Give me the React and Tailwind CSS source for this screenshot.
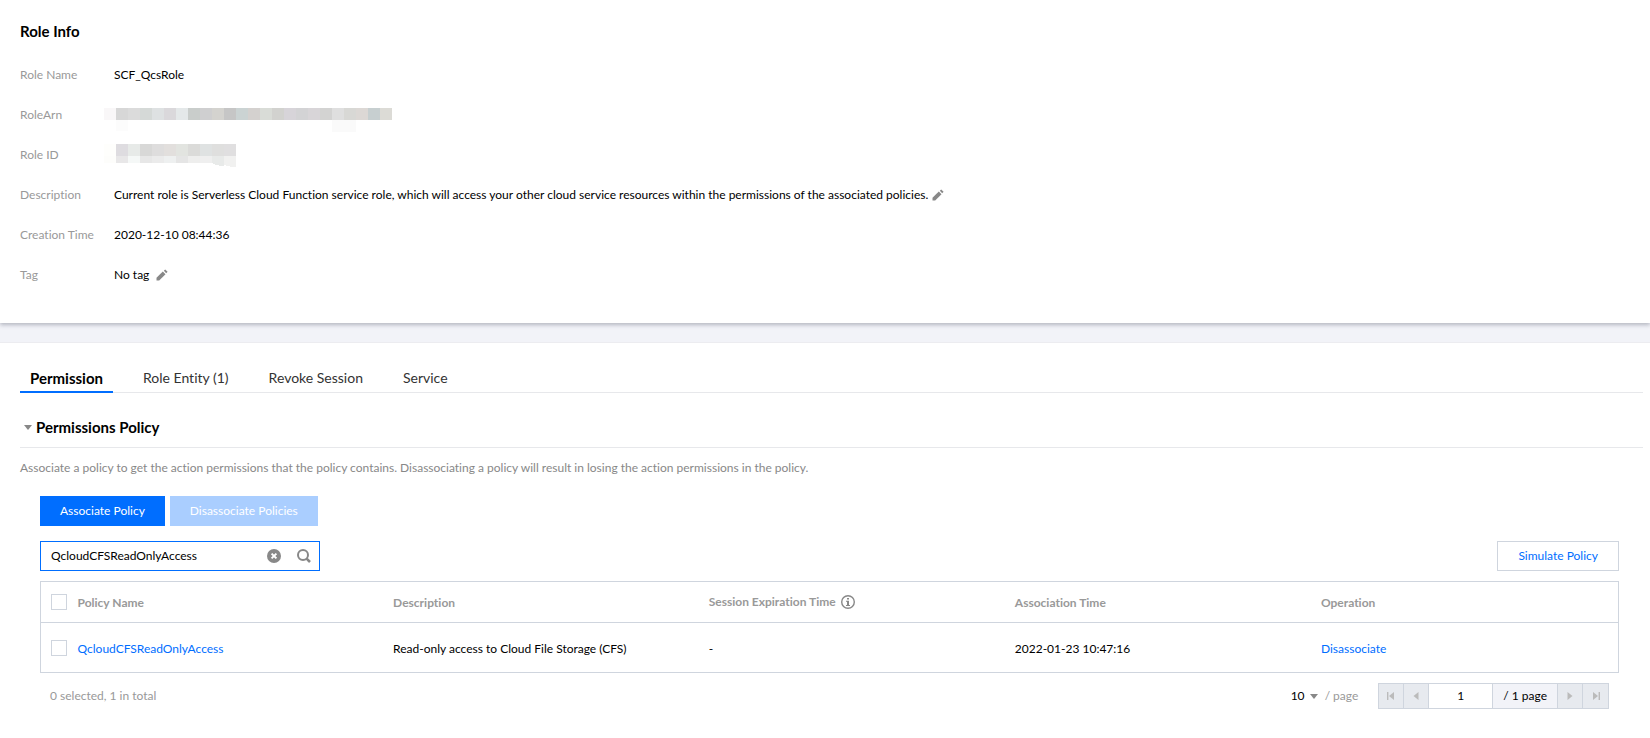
import { useState } from "react";

const LINE_CELLS = [
  "#f9f7f8", "#d7d7d7", "#dbdbdb", "#d5d9d7", "#dee1e2", "#dad8db", "#e4e8e9", "#c9cdcb",
  "#cfcfd0", "#d4d3cf", "#c6c6c6", "#cbd3d3", "#d4d1cf", "#d9dcd7", "#d2d2cf", "#d7d4d9",
  "#d3d3d5", "#d8d5d8", "#d3d3d2", "#dfdfdf", "#d8d8d5", "#dcd8d5", "#c7cfd0", "#dcdbd6",
];
const ID_CELLS = [
  "#fefefc", "#dedce0", "#e7eae8", "#d8d8d7", "#dedddd", "#e2dfdd", "#e2e4e0", "#dbdbd9",
  "#dfe2e2", "#dfdfde", "#e0dfe0",
];
const ID_CELLS_LOWER = [
  "#fdfdfb", "#e8e7e8", "#f5f8f7", "#e7e7e7", "#ebebeb", "#eef0f0", "#e5e5e5", "#eeeeed",
  "#efefef", "#e8eae9", "#f1f1f0",
];

function RedactedArn() {
  return (
    <svg className="-ml-2.5 block overflow-visible" width="290" height="14" role="img" aria-label="Hidden RoleArn" shapeRendering="crispEdges">
      {LINE_CELLS.map((c, i) => (
        <rect key={i} x={i * 12} y="0" width="12" height="12" fill={c} />
      ))}
      <rect x="12" y="12" width="12" height="11" fill="#fcfcfc" />
      <rect x="228" y="12" width="24" height="12" fill="#fafafa" />
    </svg>
  );
}

function RedactedId() {
  return (
    <svg className="-ml-2.5 block overflow-visible" width="146" height="22" role="img" aria-label="Hidden Role ID" shapeRendering="crispEdges">
      {ID_CELLS.map((c, i) => (
        <rect key={i} x={i * 12} y="0" width="12" height="12" fill={c} />
      ))}
      {ID_CELLS_LOWER.map((c, i) => (
        <rect key={i} x={i * 12} y="12" width="12" height="7" fill={c} />
      ))}
      <path d="M108 19h12v3q-7 0-12-3z" fill="#e8eae9" />
      <path d="M120 19h12v4q-6 0-12-2z" fill="#f1f1f0" />
    </svg>
  );
}

function PencilIcon() {
  return (
    <svg className="block" width="12" height="12" viewBox="0 0 12 12" fill="#888" aria-hidden="true">
      <path d="M0.5 11.5V8.8L6.8 2.6 9.5 5.2 3.2 11.5z" />
      <path d="M7.8 1.8 9.2 0.4 11.6 2.8 10.2 4.2z" />
    </svg>
  );
}

function ClearIcon() {
  return (
    <svg className="block" width="14" height="14" viewBox="0 0 14 14" aria-hidden="true">
      <circle cx="7" cy="7" r="7" fill="#888" />
      <path d="M4.6 4.6l4.8 4.8M9.4 4.6l-4.8 4.8" stroke="#fff" strokeWidth="2" />
    </svg>
  );
}

function SearchIcon() {
  return (
    <svg className="block" width="14" height="14" viewBox="0 0 14 14" fill="none" stroke="#888" strokeWidth="2" aria-hidden="true">
      <circle cx="6" cy="6" r="5" />
      <path d="M9.6 9.6 13 13" strokeWidth="2.6" />
    </svg>
  );
}

function InfoIcon() {
  return (
    <svg className="block" width="14" height="14" viewBox="0 0 14 14" aria-hidden="true">
      <circle cx="7" cy="7" r="6.3" fill="none" stroke="#888" strokeWidth="1.4" />
      <path d="M6 3h2v1.6H6zM5 5.8h3V10h1v1H5v-1h1V6.8H5z" fill="#888" />
    </svg>
  );
}

function InfoRow({ label, children }) {
  return (
    <div className="flex h-10 items-center">
      <dt className="w-[94px] shrink-0 text-[#999]">{label}</dt>
      <dd className="flex items-center">{children}</dd>
    </div>
  );
}

function CheckBox({ label }) {
  return (
    <input
      type="checkbox"
      aria-label={label}
      className="block size-4 appearance-none border border-[#cfd5de] bg-white checked:bg-[#006eff]"
    />
  );
}

function PageButton({ label, path }) {
  return (
    <button type="button" disabled aria-label={label} className="flex w-[25px] items-center justify-center border-r border-[#cfd5de] bg-[#e7eaef] last:border-r-0">
      <svg width="8" height="8" viewBox="0 0 8 8" fill="#bbb" aria-hidden="true">
        <path d={path} />
      </svg>
    </button>
  );
}

const TABS = ["Permission", "Role Entity (1)", "Revoke Session", "Service"];

export default function App() {
  const [tab, setTab] = useState(0);
  const [query, setQuery] = useState("QcloudCFSReadOnlyAccess");
  return (
    <div className="min-h-screen bg-white font-['Lato',sans-serif] text-[12px] leading-5 text-black [font-variant-ligatures:none]">
      <section className="relative bg-white px-5 pt-5 pb-7 shadow-[0_2px_4px_rgba(54,58,80,0.32)]">
        <h2 className="pt-[1px] pb-[14px] text-[15px] leading-5 font-bold">Role Info</h2>
        <dl>
          <InfoRow label="Role Name">SCF_QcsRole</InfoRow>
          <InfoRow label="RoleArn"><RedactedArn /></InfoRow>
          <InfoRow label="Role ID"><RedactedId /></InfoRow>
          <InfoRow label="Description">
            Current role is Serverless Cloud Function service role, which will access your other cloud service resources within the permissions of the associated policies.
            <button type="button" aria-label="Edit description" className="ml-1"><PencilIcon /></button>
          </InfoRow>
          <InfoRow label="Creation Time">2020-12-10 08:44:36</InfoRow>
          <InfoRow label="Tag">
            No tag
            <button type="button" aria-label="Edit tag" className="ml-[7px]"><PencilIcon /></button>
          </InfoRow>
        </dl>
      </section>
      <div className="h-5 border-b border-[#ececf0] bg-[#f2f3f8]" />
      <section className="pt-5 pr-[7px] pl-5">
        <div role="tablist" className="flex gap-5 border-b border-[#e7e8eb]">
          {TABS.map((t, i) => (
            <button
              key={t}
              type="button"
              role="tab"
              aria-selected={tab === i}
              onClick={() => setTab(i)}
              className={tab === i
                ? "-mb-px border-b-2 border-[#006eff] px-2.5 pt-[5px] pb-[3px] text-[15px] leading-5 font-bold"
                : "px-2.5 pt-[5px] pb-1 text-[14px] leading-5 text-[#333]"}
            >
              {t}
            </button>
          ))}
        </div>
        <h3 className="mt-6 flex items-center gap-1 border-b border-[#e7e8eb] pb-[10px] pl-1 text-[15px] leading-5 font-bold">
          <svg width="8" height="5" viewBox="0 0 8 5" fill="#888" aria-hidden="true"><path d="M0 0h8L4 5z" /></svg>
          Permissions Policy
        </h3>
        <p className="mt-[10px] text-[#888]">
          Associate a policy to get the action permissions that the policy contains. Disassociating a policy will result in losing the action permissions in the policy.
        </p>
        <div className="mt-[18px] mr-6 ml-5">
          <div className="flex gap-[5px]">
            <button type="button" className="h-[30px] bg-[#006eff] px-5 text-white">Associate Policy</button>
            <button type="button" disabled className="h-[30px] bg-[#aaceff] px-5 text-white">Disassociate Policies</button>
          </div>
          <div className="mt-[15px] flex justify-between">
            <div className="flex h-[30px] w-[280px] items-center border border-[#006eff] pr-2 pl-2.5">
              <input aria-label="Search policies" value={query} onChange={(e) => setQuery(e.target.value)} className="min-w-0 flex-1 outline-none" />
              <button type="button" aria-label="Clear" onClick={() => setQuery("")}><ClearIcon /></button>
              <button type="button" aria-label="Search" className="ml-4"><SearchIcon /></button>
            </div>
            <button type="button" className="h-[30px] border border-[#cfd5de] px-5 text-[#006eff]">Simulate Policy</button>
          </div>
          <table className="mt-2.5 w-full table-fixed border-collapse border border-[#cfd5de] text-left">
            <colgroup>
              <col className="w-[27px]" />
              <col className="w-[20%]" />
              <col className="w-[20%]" />
              <col className="w-[19.4%]" />
              <col className="w-[19.4%]" />
              <col />
            </colgroup>
            <thead className="text-[#999]">
              <tr className="h-[41px] border-b border-[#cfd5de]">
                <th className="pl-2.5"><CheckBox label="Select all" /></th>
                <th className="px-2.5 pt-0.5 font-bold">Policy Name</th>
                <th className="px-2.5 pt-0.5 font-bold">Description</th>
                <th className="px-2.5 font-bold">
                  <span className="flex items-center gap-[5px]">Session Expiration Time <InfoIcon /></span>
                </th>
                <th className="px-2.5 pt-0.5 font-bold">Association Time</th>
                <th className="px-2.5 pt-0.5 font-bold">Operation</th>
              </tr>
            </thead>
            <tbody>
              <tr className="h-[50px]">
                <td className="pl-2.5"><CheckBox label="Select QcloudCFSReadOnlyAccess" /></td>
                <td className="px-2.5 pt-0.5"><a href="#policy" className="text-[#006eff]">QcloudCFSReadOnlyAccess</a></td>
                <td className="px-2.5 pt-0.5">Read-only access to Cloud File Storage (CFS)</td>
                <td className="px-2.5 pt-0.5">-</td>
                <td className="px-2.5 pt-0.5">2022-01-23 10:47:16</td>
                <td className="px-2.5 pt-0.5"><a href="#disassociate" className="text-[#006eff]">Disassociate</a></td>
              </tr>
            </tbody>
          </table>
          <div className="flex items-center px-2.5 pt-2.5">
            <span className="text-[#999]">0 selected, 1 in total</span>
            <label className="ml-auto flex items-center text-[#999]">
              <span className="relative flex items-center">
                <select aria-label="Items per page" className="w-[34px] appearance-none text-black">
                  <option>10</option>
                  <option>20</option>
                </select>
                <svg className="pointer-events-none absolute right-[7px]" width="8" height="5" viewBox="0 0 8 5" fill="#888" aria-hidden="true"><path d="M0 0h8L4 5z" /></svg>
              </span>
              / page
            </label>
            <div className="ml-5 flex h-[26px] border border-[#cfd5de]">
              <PageButton label="First page" path="M0 0h1.4v8H0zM7 0v8L2 4z" />
              <PageButton label="Previous page" path="M6.5 0v8L1.5 4z" />
              <input aria-label="Page number" defaultValue="1" className="w-[63px] text-center outline-none" />
              <span className="flex items-center border-x border-[#cfd5de] bg-[#f2f3f8] px-2.5">/ 1 page</span>
              <PageButton label="Next page" path="M1.5 0v8l5-4z" />
              <PageButton label="Last page" path="M6.6 0H8v8H6.6zM1 0v8l5-4z" />
            </div>
          </div>
        </div>
      </section>
    </div>
  );
}
